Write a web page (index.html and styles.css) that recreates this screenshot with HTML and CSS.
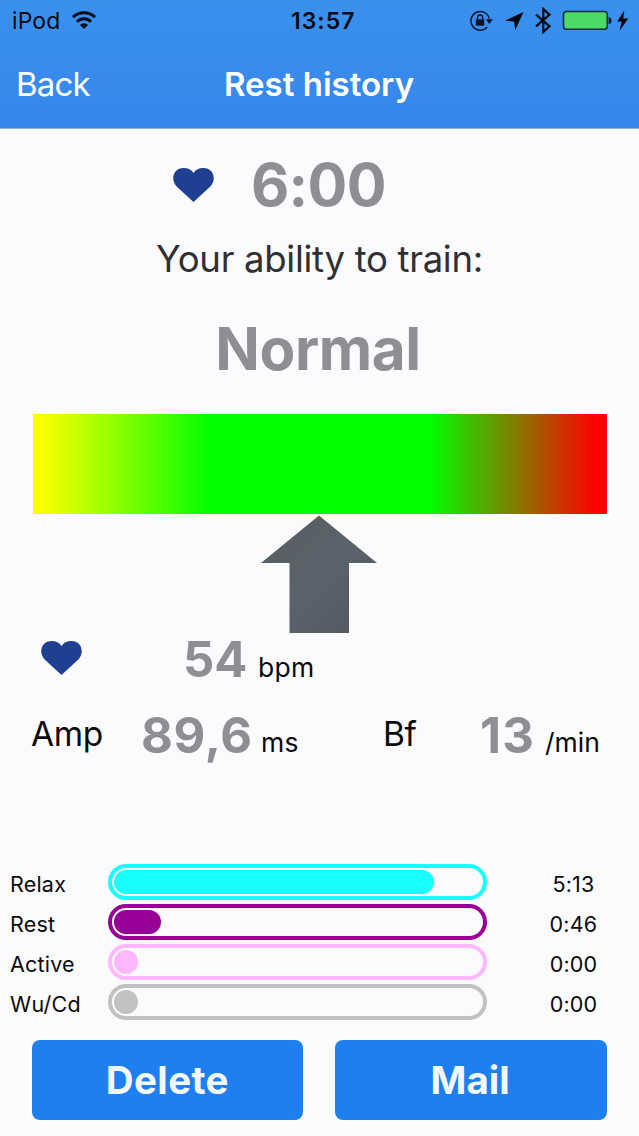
FILE: index.html
```html
<!DOCTYPE html>
<html lang="en">
<head>
<meta charset="utf-8">
<title>Rest history</title>
<link rel="stylesheet" href="styles.css">
</head>
<body>
<header class="header">
  <div class="status">
    <div class="status-left">
      <span class="carrier">iPod</span>
      <svg class="wifi" width="24" height="18" viewBox="0 0 24 18" fill="none" stroke="#050b18" stroke-width="3">
        <path d="M1 6.200a15.600 15.600 0 0 1 22 0M4.900 10.700a10 10 0 0 1 14.200 0"/>
        <path d="M12 18l-4.100-4.100a5.800 5.800 0 0 1 8.200 0z" fill="#050b18" stroke="none"/>
      </svg>
    </div>
    <span class="clock">13:57</span>
    <div class="status-right">
      <svg width="159" height="28" viewBox="0 0 159 28">
        <path d="M17.300 20A9.300 9.300 0 1 1 19.300 11.500" fill="none" stroke="#07142a" stroke-width="1.500"/>
        <path d="M15.800 12.300h7l-3.500 4.700z" fill="#07142a"/>
        <path d="M5.800 12.300h8.400v6.400H5.800z" fill="#07142a"/>
        <path d="M7.500 12.500v-2a2.550 2.550 0 0 1 5.100 0v2" fill="none" stroke="#07142a" stroke-width="1.500"/>
        <path d="M53.500 5L35 13.700l9 .9 1.200 8.600z" fill="#02060e"/>
        <path d="M66 7.600l13.500 11.700-6.200 5.700V2l6.200 5.700L66 19.400" fill="none" stroke="#02060e" stroke-width="2.200"/>
        <rect x="93.500" y="4.500" width="43.800" height="17.800" rx="3" fill="#4cd964" stroke="#0b2a48" stroke-width="1.600"/>
        <path d="M138.700 10.200c3.800 0 3.800 6.800 0 6.800z" fill="#07142a"/>
        <path d="M154.300 3.300l-7 11.200h4.400l-2.200 9.300 8.800-12.300h-5z" fill="#02060e"/>
      </svg>
    </div>
  </div>
  <nav class="nav">
    <a class="back">Back</a>
    <h1 class="title">Rest history</h1>
  </nav>
</header>

<main class="content">
  <div class="duration">
    <svg class="heart" width="41" height="34" viewBox="0 0 41 34"><path d="M20.500 34L3.400 18.200C-3 11 .8 0 10.600 0c4.500 0 7.800 1.800 9.900 5C22.600 1.800 25.900 0 30.400 0 40.200 0 44 11 37.600 18.200z"/></svg>
    <span class="duration-value">6:00</span>
  </div>
  <p class="question"><span>Your ability to train:</span></p>
  <p class="ability"><span>Normal</span></p>
  <div class="scale"></div>
  <div class="pointer">
    <svg width="118" height="118" viewBox="0 0 118 118">
      <defs><linearGradient id="steel" x1="0" y1="0" x2="1" y2="1"><stop offset="0" stop-color="#585c62"/><stop offset=".5" stop-color="#5a626b"/><stop offset="1" stop-color="#535860"/></linearGradient></defs>
      <path d="M59 .5L117 48H89v70H29.500V48H1z" fill="url(#steel)"/>
    </svg>
  </div>
  <section class="metrics">
    <div class="metric-row pulse">
      <svg class="heart" width="41" height="34" viewBox="0 0 41 34"><path d="M20.500 34L3.400 18.200C-3 11 .8 0 10.600 0c4.500 0 7.800 1.800 9.900 5C22.600 1.800 25.900 0 30.400 0 40.200 0 44 11 37.600 18.200z"/></svg>
      <span class="value bpm-value">54</span><span class="unit bpm-unit">bpm</span>
    </div>
    <div class="metric-row pair">
      <div class="metric amp"><span class="name amp-name">Amp</span><span class="value amp-value">89,6</span><span class="unit amp-unit">ms</span></div>
      <div class="metric bf"><span class="name bf-name">Bf</span><span class="value bf-value">13</span><span class="unit bf-unit">/min</span></div>
    </div>
  </section>
  <section class="zones">
    <div class="zone relax"><span class="zone-name">Relax</span><div class="track"><div class="fill" style="width:320px"></div></div><span class="zone-time">5:13</span></div>
    <div class="zone rest"><span class="zone-name">Rest</span><div class="track"><div class="fill" style="width:47px"></div></div><span class="zone-time">0:46</span></div>
    <div class="zone active"><span class="zone-name">Active</span><div class="track"><div class="fill" style="width:24px"></div></div><span class="zone-time">0:00</span></div>
    <div class="zone warmup"><span class="zone-name">Wu/Cd</span><div class="track"><div class="fill" style="width:24px"></div></div><span class="zone-time">0:00</span></div>
  </section>
  <div class="actions">
    <button class="button delete">Delete</button>
    <button class="button mail">Mail</button>
  </div>
</main>
</body>
</html>
```
FILE: styles.css
```css
* { box-sizing: border-box; }
body {
  margin: 0;
  width: 639px;
  height: 1136px;
  overflow: hidden;
  background: #fbfafd;
  color: #0b0b0d;
  font-family: Inter, "Liberation Sans", sans-serif;
}
p, h1 { margin: 0; }
span, a { white-space: nowrap; }

.header {
  height: 129px;
  background: linear-gradient(#3a91ec, #3686ea);
  border-bottom: 1px solid #8fb0da;
}
.status {
  display: grid;
  grid-template-columns: 291px 1fr 1fr;
  height: 42px;
  line-height: 42px;
  font-size: 23px;
  color: #050b18;
}
.status-left { display: flex; align-items: center; padding-left: 12px; }
.carrier { width: 60px; letter-spacing: .1px; }
.wifi { margin-top: -3px; }
.clock { font-weight: 600; letter-spacing: 1px; }
.status-right { display: flex; justify-content: flex-end; align-items: center; padding-right: 10px; }
.nav {
  display: grid;
  grid-template-columns: 224px 1fr;
  height: 85px;
  line-height: 85px;
  font-size: 33px;
  color: #fff;
}
.back { padding-left: 16px; font-weight: 400; letter-spacing: -.8px; }
.title { font-size: 33px; font-weight: 600; }

.heart { flex: none; fill: #1f4090; }
.duration {
  display: flex;
  align-items: center;
  height: 111px;
  padding-left: 173px;
  gap: 37px;
}
.duration-value, .ability {
  font-size: 59px;
  font-weight: 700;
  color: #8f8e92;
}
.duration-value { letter-spacing: -.7px; }
.question {
  height: 40px;
  line-height: 39px;
  text-align: center;
  font-size: 36.5px;
  font-weight: 400;
  color: #303033;
  letter-spacing: -.28px;
}
.ability { height: 134px; line-height: 138px; font-size: 58.5px; letter-spacing: -.4px; padding-right: 3px; text-align: center; }
.scale {
  height: 100px;
  margin: 0 32px 0 32.5px;
  background: linear-gradient(90deg, #ff0 0%, #ff0 1%, #0f0 31%, #0f0 69%, #f00 98%, #f00 100%);
}
.pointer { display: flex; padding: 1px 0 0 260px; height: 120px; }
.metrics { height: 230px; }
.metric-row { display: flex; }
.pulse { height: 50px; padding-left: 41px; align-items: baseline; }
.pulse .heart { align-self: flex-start; margin-top: 7px; }
.value { font-size: 49px; font-weight: 700; line-height: 51px; color: #8f8e92; }
.unit { font-size: 26.5px; line-height: 50px; letter-spacing: .3px; }
.name { font-size: 33.5px; line-height: 77px; letter-spacing: -.4px; }
.bpm-value { width: 75px; margin-left: 101px; }
.pair { height: 76px; margin-top: 12px; }
.metric { display: flex; height: 76px; }
.pair .value { line-height: 79px; }
.pair .unit { line-height: 93px; }
.bf .unit { letter-spacing: 0; }
.amp { width: 383px; padding-left: 31px; }
.amp-name { width: 110px; }
.amp-value { width: 120px; letter-spacing: .7px; }
.bf-name { width: 97px; }
.bf-value { width: 65px; letter-spacing: 1px; }

.zones { display: grid; gap: 4px; }
.zone {
  display: grid;
  grid-template-columns: 98px 379px 173px;
  height: 36px;
  padding-left: 10px;
  line-height: 41px;
  font-size: 21.5px;
  letter-spacing: .2px;
}
.track { height: 36px; padding: 2px; border: 4px solid var(--tone); border-radius: 18px; }
.fill { height: 24px; border-radius: 12px; background: var(--tone); }
.zone-time { text-align: center; }
.relax { --tone: #19ffff; }
.rest { --tone: #960096; }
.active { --tone: #ffb8ff; }
.warmup { --tone: #c3c1c3; }

.actions { display: grid; grid-template-columns: 1fr 1fr; gap: 32px; padding: 20px 32px 0 31.5px; }
.button {
  height: 80px;
  padding: 0;
  border: 0;
  border-radius: 8px;
  background: #1e7ff1;
  color: #f3f7fe;
  font: 700 38.5px/80px Inter, "Liberation Sans", sans-serif;
  letter-spacing: .4px;
}
.mail { padding-right: 2px; letter-spacing: 0; }
```
